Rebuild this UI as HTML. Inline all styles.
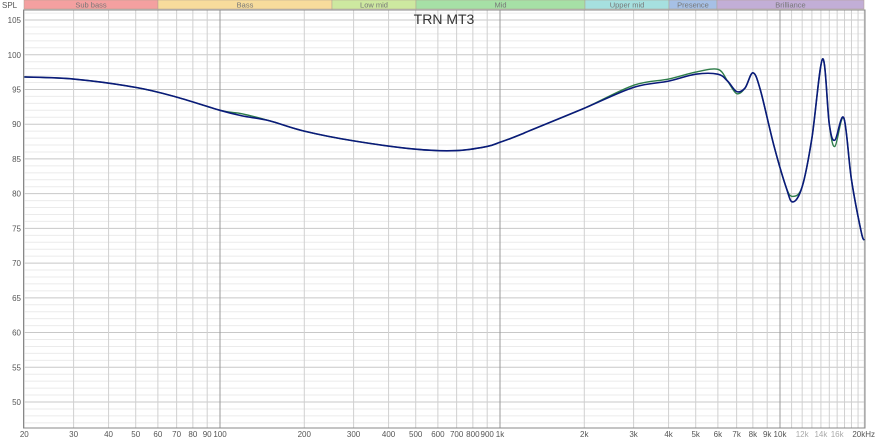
<!DOCTYPE html>
<html><head><meta charset="utf-8"><style>
html,body{margin:0;padding:0;background:#fff;width:877px;height:440px;overflow:hidden}
svg{display:block;font-family:"Liberation Sans",Arial,sans-serif}
</style></head><body>
<svg id="s" width="877" height="440" xmlns="http://www.w3.org/2000/svg"></svg>
<script>
var s=document.getElementById('s'),o='';
function X(f){return 220+280*Math.log10(f/100);}
function Y(d){return 402-(d-50)*6.945;}
o+='<rect x="0" y="0" width="877" height="440" fill="#fff"/>';
// horizontal minor
for(var d=46;d<=106;d++){var y=Y(d);if(y<10||y>428)continue;o+='<line x1="24" x2="865" y1="'+y+'" y2="'+y+'" stroke="'+(d%5==0?'#c8c8c8':'#ebebeb')+'" stroke-width="1"/>';}
var fs=[];for(var f=20;f<100;f+=10)fs.push(f);for(f=100;f<1000;f+=100)fs.push(f);for(f=1000;f<10000;f+=1000)fs.push(f);for(f=10000;f<=20000;f+=1000)fs.push(f);
fs.forEach(function(f){var x=X(f),c=(f==100||f==1000||f==10000)?'#999':'#d0d0d0';o+='<line x1="'+x+'" x2="'+x+'" y1="10" y2="428" stroke="'+c+'" stroke-width="1"/>';});
// bands
var b=[[24,158,'#f4a0a0','Sub bass'],[158,332,'#f7dc9c','Bass'],[332,416,'#cde8a0','Low mid'],[416,585,'#a6e0a6','Mid'],[585,669,'#a6e0df','Upper mid'],[669,717,'#a6c0e6','Presence'],[717,864,'#c2aed6','Brilliance']];
b.forEach(function(a){o+='<rect x="'+a[0]+'" y="0" width="'+(a[1]-a[0])+'" height="9" fill="'+a[2]+'" stroke="#b0a090" stroke-width="0.5"/><text x="'+((a[0]+a[1])/2)+'" y="7.5" font-size="7.5" fill="#777" text-anchor="middle">'+a[3]+'</text>';});
o+='<text x="2" y="8" font-size="8" fill="#555">SPL</text>';
o+='<rect x="23.5" y="10" width="841.5" height="418" fill="none" stroke="#888" stroke-width="1"/>';
for(d=50;d<=105;d+=5)o+='<text x="21" y="'+(Y(d)+3)+'" font-size="8" fill="#555" text-anchor="end">'+d+'</text>';
var lab=[[20,'20'],[30,'30'],[40,'40'],[50,'50'],[60,'60'],[70,'70'],[80,'80'],[90,'90'],[100,'100'],[200,'200'],[300,'300'],[400,'400'],[500,'500'],[600,'600'],[700,'700'],[800,'800'],[900,'900'],[1000,'1k'],[2000,'2k'],[3000,'3k'],[4000,'4k'],[5000,'5k'],[6000,'6k'],[7000,'7k'],[8000,'8k'],[9000,'9k'],[10000,'10k'],[12000,'12k'],[14000,'14k'],[16000,'16k']];
lab.forEach(function(a){var g=(a[0]==12000||a[0]==14000||a[0]==16000);o+='<text x="'+X(a[0])+'" y="437" font-size="8" fill="'+(g?'#aaa':'#555')+'" text-anchor="middle">'+a[1]+'</text>';});
o+='<text x="875" y="437" font-size="8" fill="#555" text-anchor="end">20kHz</text>';
o+='<text x="444" y="24" font-size="14" fill="#333" text-anchor="middle">TRN MT3</text>';
function path(p){var q=p.map(function(a){return [X(a[0]),Y(a[1])];});var d='M'+q[0][0]+','+q[0][1];
for(var i=0;i<q.length-1;i++){var p0=q[i-1]||q[i],p1=q[i],p2=q[i+1],p3=q[i+2]||p2;
d+=' C'+(p1[0]+(p2[0]-p0[0])/6)+','+(p1[1]+(p2[1]-p0[1])/6)+' '+(p2[0]-(p3[0]-p1[0])/6)+','+(p2[1]-(p3[1]-p1[1])/6)+' '+p2[0]+','+p2[1];}return d;}
var blue=[[20,96.8],[30,96.5],[50,95.3],[70,93.9],[100,92],[120,91.2],[150,90.5],[200,89],[300,87.6],[500,86.4],[700,86.2],[900,86.8],[1000,87.4],[1100,88],[1200,88.6],[1300,89.2],[2000,92.3],[3000,95.3],[4000,96.2],[5000,97.2],[6000,97.2],[6500,96.2],[7000,94.7],[7500,95.2],[8000,97.4],[8500,95],[9500,87],[10500,81],[11100,78.8],[12000,81],[13000,88],[14200,99.4],[15000,90],[15700,87.7],[16900,90.9],[18000,82],[19500,74.5],[20000,73.3]];
var green=blue.map(function(a){var d=a[1],f=a[0];
if(f==5000)d=97.5;if(f==6000)d=97.9;if(f==7000)d=94.4;if(f==11100)d=79.6;if(f==15700)d=86.8;if(f==4000)d=96.5;if(f==3000)d=95.6;if(f==120)d=91.5;return [f,d];});
o+='<path d="'+path(green)+'" fill="none" stroke="#2e7d4a" stroke-width="1.4"/>';
o+='<path d="'+path(blue)+'" fill="none" stroke="#0a1a7a" stroke-width="1.6"/>';
s.innerHTML=o;
</script>
</body></html>
